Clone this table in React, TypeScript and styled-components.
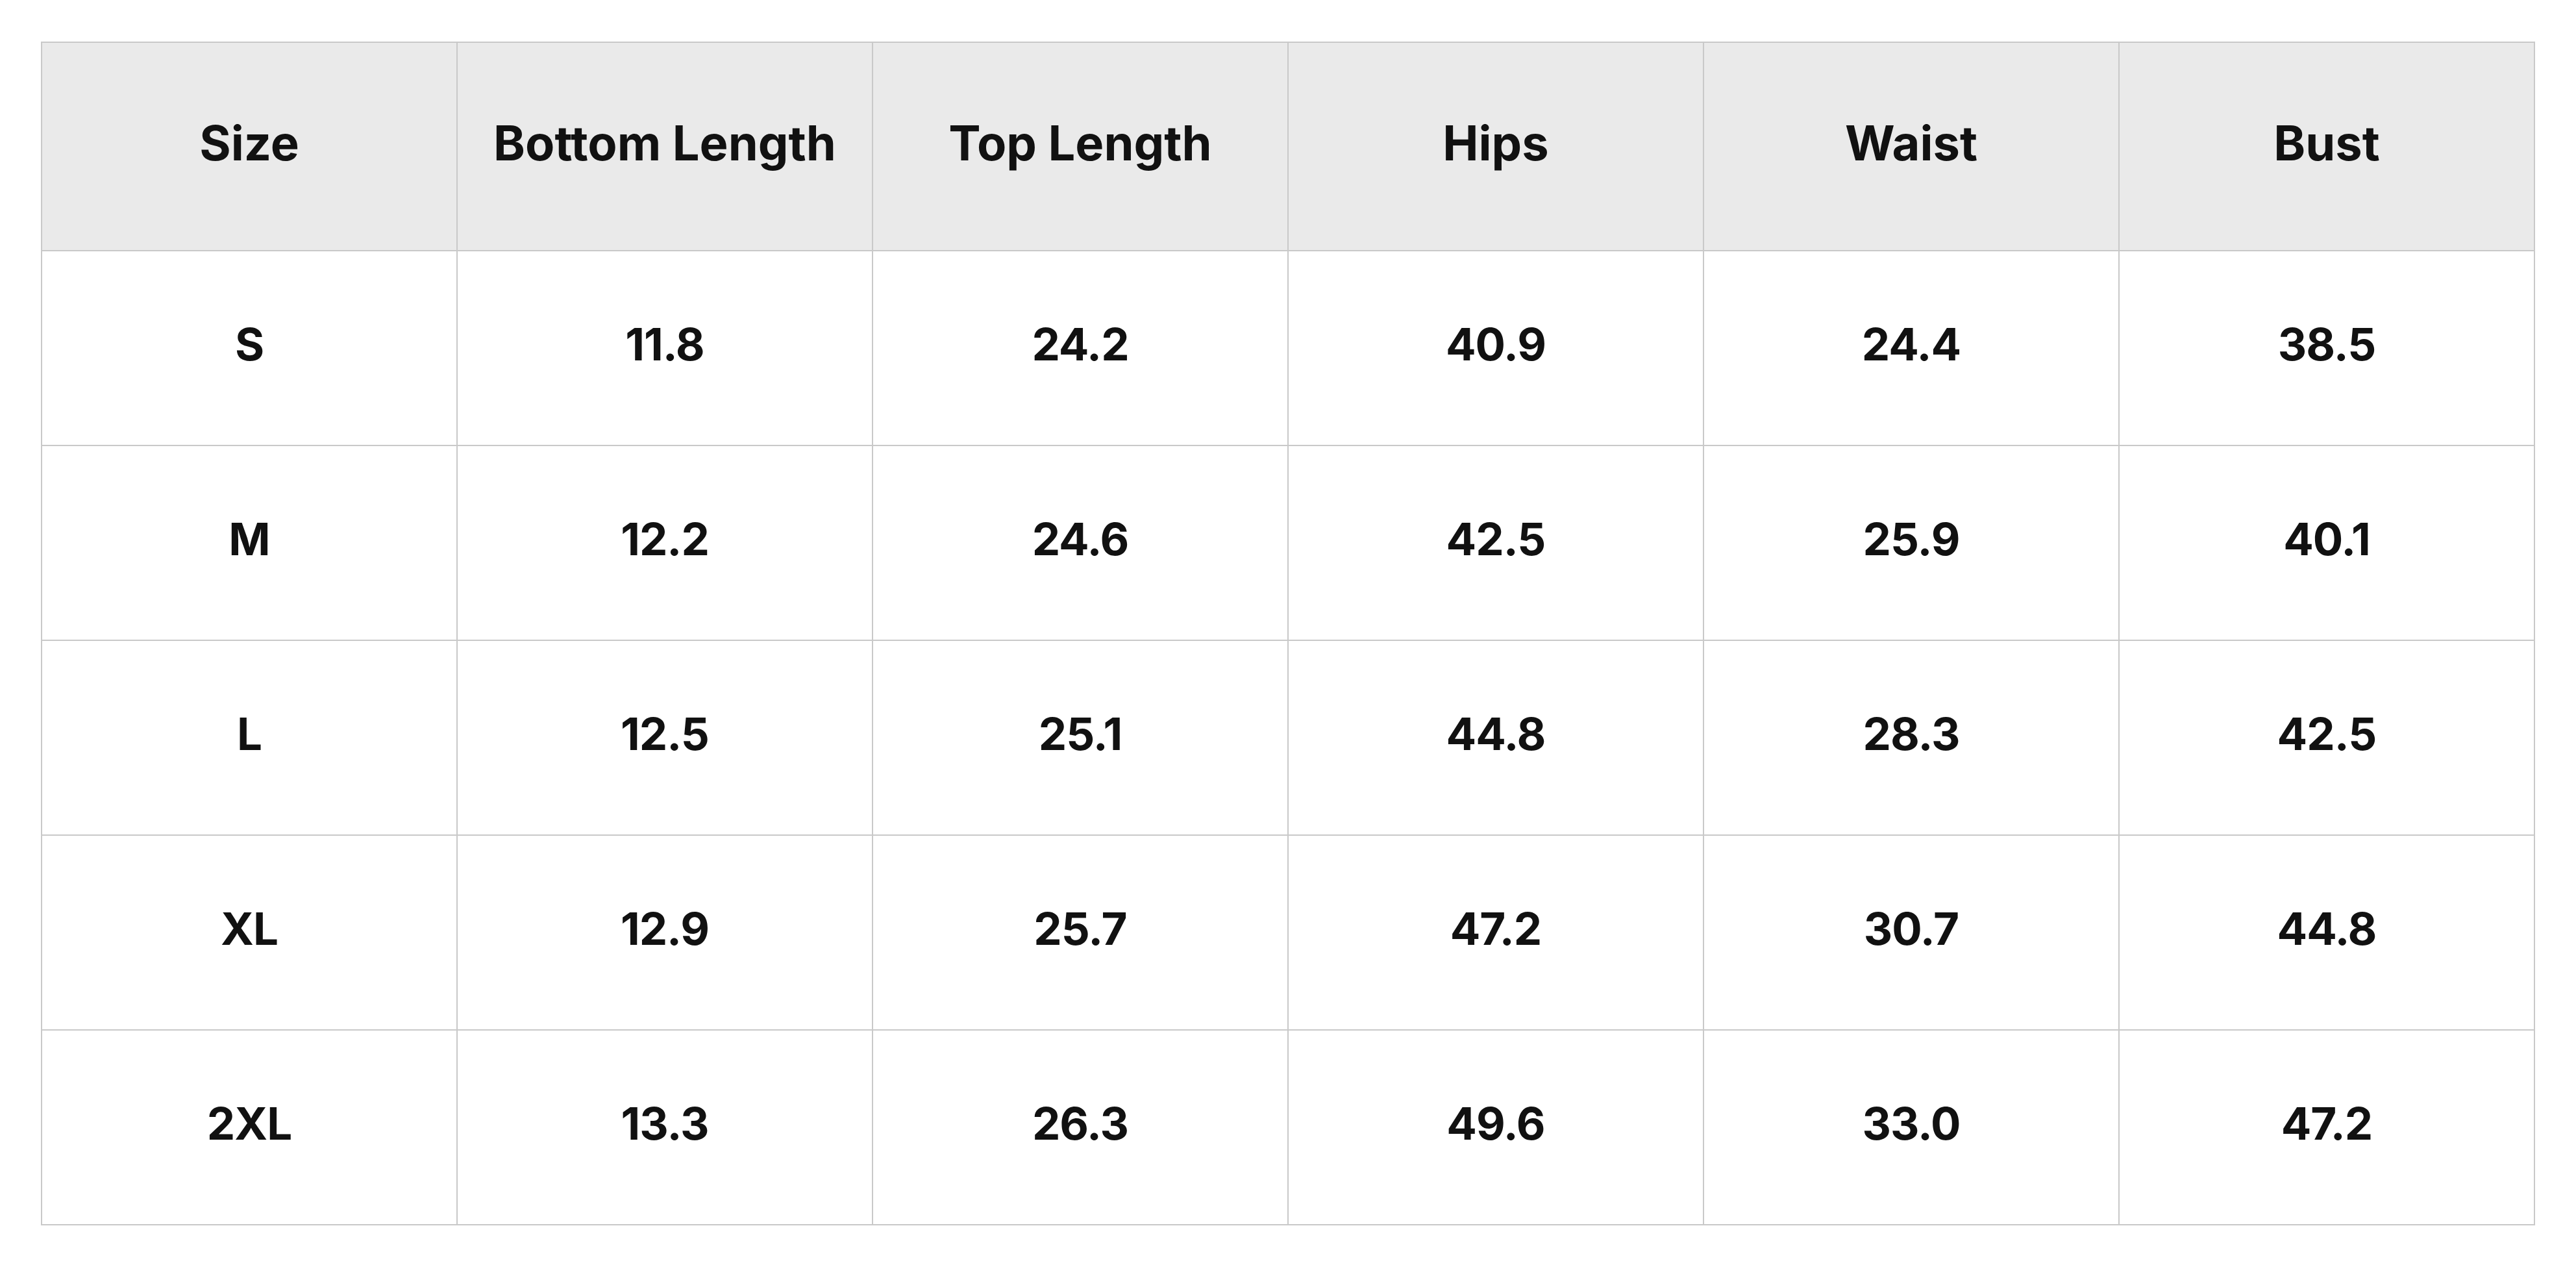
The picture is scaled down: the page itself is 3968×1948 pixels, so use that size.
import { FC } from "react";
import styled, { createGlobalStyle } from "styled-components";

const GlobalStyle = createGlobalStyle`
    html, body {
        margin: 0;
        padding: 0;
        background: #ffffff;
    }
    body {
        font-family: Inter, "Noto Sans", "Liberation Sans", sans-serif;
        color: #111111;
    }
`;

const Page = styled.div`
    padding: 64px 63px;
`;

const Table = styled.table`
    width: 100%;
    border-collapse: collapse;
    table-layout: fixed;
    border: 2.5px solid #c9c9c9;
`;

const HeadCell = styled.th`
    box-sizing: border-box;
    height: 321px;
    padding: 0 0 12px;
    background: #eaeaea;
    border: 2.5px solid #c9c9c9;
    font-size: 74px;
    font-weight: 700;
    line-height: 1;
    text-align: center;
    vertical-align: middle;
`;

const Cell = styled.td`
    box-sizing: border-box;
    height: 300px;
    padding: 0 0 12px;
    border: 2.5px solid #c9c9c9;
    font-size: 69px;
    font-weight: 700;
    letter-spacing: -1px;
    line-height: 1;
    text-align: center;
    vertical-align: middle;
`;

const columns = ["Size", "Bottom Length", "Top Length", "Hips", "Waist", "Bust"];

const rows: string[][] = [
    ["S", "11.8", "24.2", "40.9", "24.4", "38.5"],
    ["M", "12.2", "24.6", "42.5", "25.9", "40.1"],
    ["L", "12.5", "25.1", "44.8", "28.3", "42.5"],
    ["XL", "12.9", "25.7", "47.2", "30.7", "44.8"],
    ["2XL", "13.3", "26.3", "49.6", "33.0", "47.2"],
];

const App: FC = () => {
    return (
        <>
            <GlobalStyle />
            <Page>
                <Table>
                    <thead>
                        <tr>
                            {columns.map((c) => (
                                <HeadCell key={c}>{c}</HeadCell>
                            ))}
                        </tr>
                    </thead>
                    <tbody>
                        {rows.map((r) => (
                            <tr key={r[0]}>
                                {r.map((v, i) => (
                                    <Cell key={i}>{v}</Cell>
                                ))}
                            </tr>
                        ))}
                    </tbody>
                </Table>
            </Page>
        </>
    );
};

export default App;
